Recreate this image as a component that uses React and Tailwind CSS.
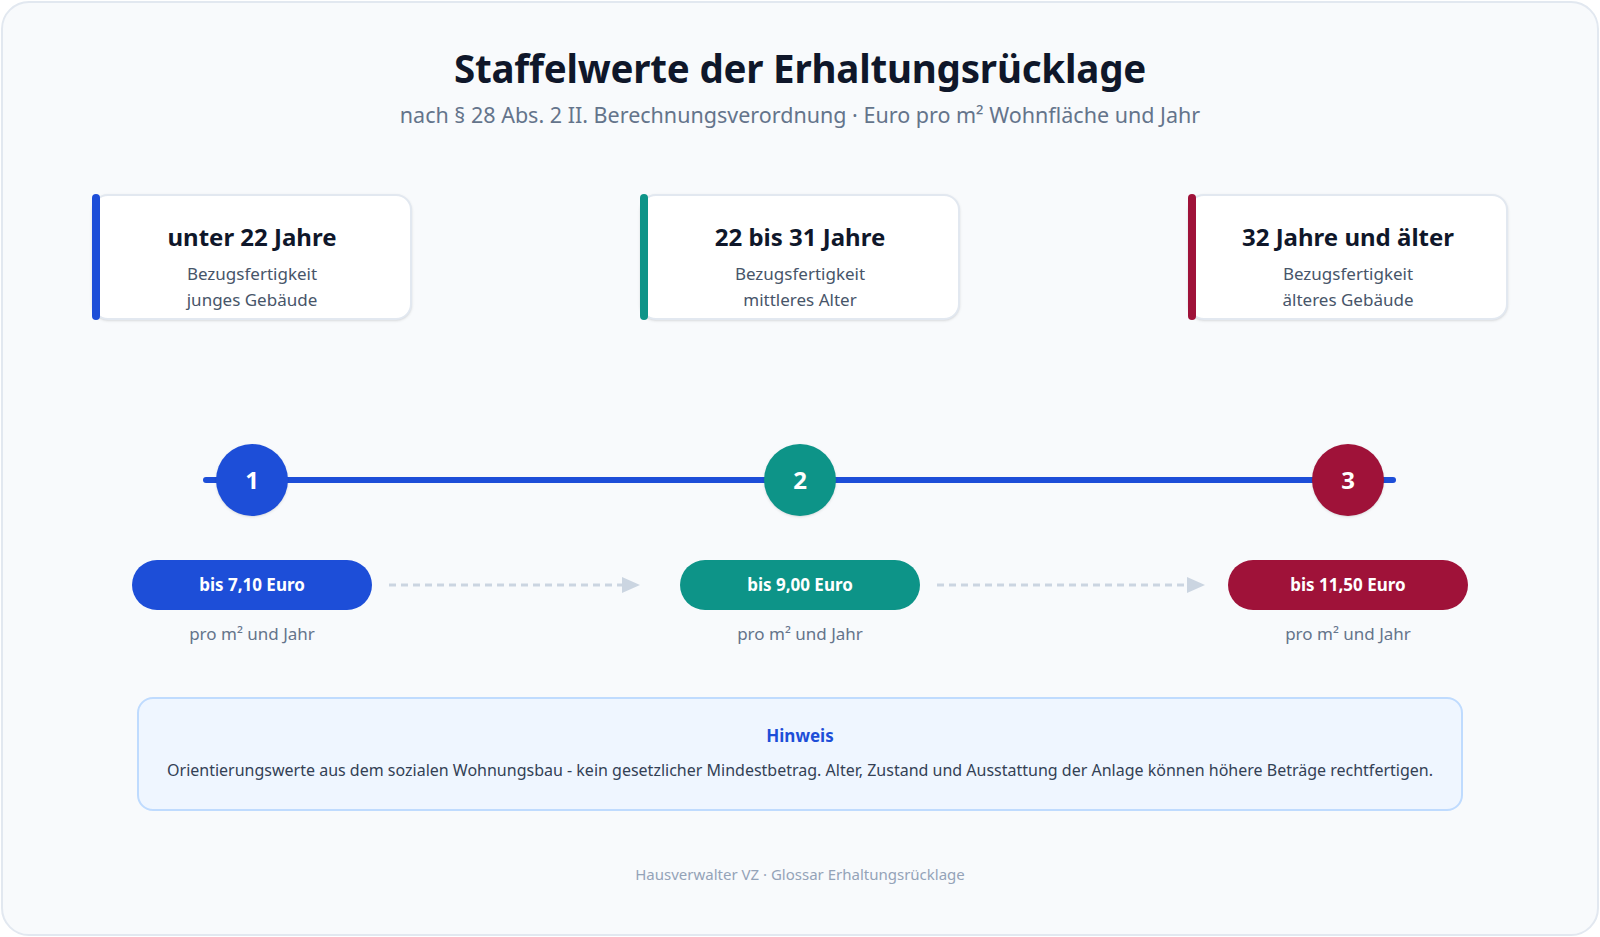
const stages = [
  {
    title: 'unter 22 Jahre',
    line1: 'Bezugsfertigkeit',
    line2: 'junges Gebäude',
    bar: 'bg-[#1d4ed8]',
    num: '1',
    price: 'bis 7,10 Euro',
  },
  {
    title: '22 bis 31 Jahre',
    line1: 'Bezugsfertigkeit',
    line2: 'mittleres Alter',
    bar: 'bg-[#0d9488]',
    num: '2',
    price: 'bis 9,00 Euro',
  },
  {
    title: '32 Jahre und älter',
    line1: 'Bezugsfertigkeit',
    line2: 'älteres Gebäude',
    bar: 'bg-[#9f1239]',
    num: '3',
    price: 'bis 11,50 Euro',
  },
];

function DashedArrow({ className, width }) {
  return (
    <svg
      width={width}
      height="18"
      viewBox={`0 0 ${width} 18`}
      className={`absolute top-[16px] ${className}`}
    >
      <line x1="0" y1="9" x2={width - 16} y2="9" stroke="#cbd5e1" strokeWidth="3" strokeDasharray="7 5" />
      <polygon points={`${width - 18},1 ${width},9 ${width - 18},17`} fill="#cbd5e1" />
    </svg>
  );
}

export default function App() {
  return (
    <div className="h-[937px] bg-white p-px" style={{ fontFamily: '"Noto Sans", "Open Sans", sans-serif' }}>
      <div className="h-full rounded-[28px] border-2 border-[#e2e8f0] bg-[#f8fafc] px-[89px] pt-[41px]">
        <div className="text-center">
          <h1 className="text-[38.5px] leading-[48px] font-bold text-[#0f172a] tracking-[-0.2px]">
            Staffelwerte der Erhaltungsrücklage
          </h1>
          <p className="mt-2 text-[21.5px] leading-[30px] text-[#64748b]">
            nach § 28 Abs. 2 II. Berechnungsverordnung · Euro pro m² Wohnfläche und Jahr
          </p>
        </div>

        {/* age cards */}
        <div className="mt-16 flex justify-between">
          {stages.map((s) => (
            <div
              key={s.num}
              className="relative w-[320px] h-[126px] rounded-2xl border-2 border-[#e2e8f0] bg-white shadow-sm flex flex-col items-center pt-[25px]"
            >
              <div className={`absolute -left-0.5 -top-0.5 -bottom-0.5 w-2 rounded-full ${s.bar}`} />
              <div className="text-[24px] leading-[32px] font-bold text-[#0f172a]">{s.title}</div>
              <div className="mt-2 text-[17px] leading-[26px] text-[#475569] text-center">
                <div>{s.line1}</div>
                <div>{s.line2}</div>
              </div>
            </div>
          ))}
        </div>

        {/* timeline */}
        <div className="relative mt-[124px] flex justify-between">
          <div className="absolute left-[111px] right-[112px] top-1/2 -translate-y-1/2 h-1.5 rounded-full bg-[#1d4ed8]" />
          {stages.map((s) => (
            <div key={s.num} className="relative w-[320px] flex justify-center">
              <div
                className={`w-[72px] h-[72px] rounded-full ${s.bar} flex items-center justify-center text-white text-[24px] font-bold shadow-sm`}
              >
                {s.num}
              </div>
            </div>
          ))}
        </div>

        {/* prices */}
        <div className="relative mt-11 flex justify-between">
          <DashedArrow className="left-[297px]" width={251} />
          <DashedArrow className="left-[845px]" width={268} />
          {stages.map((s) => (
            <div key={s.num} className="w-[320px] flex flex-col items-center">
              <div
                className={`w-[240px] h-[50px] rounded-full ${s.bar} flex items-center justify-center text-white text-[17px] font-bold`}
              >
                {s.price}
              </div>
              <div className="mt-3 text-[17px] leading-6 text-[#64748b]">pro m² und Jahr</div>
            </div>
          ))}
        </div>

        {/* note */}
        <div className="mx-auto mt-[51px] w-[1326px] h-[114px] rounded-2xl border-2 border-[#bfdbfe] bg-[#eff6ff] pt-[25px] text-center">
          <div className="text-[17px] leading-6 font-bold text-[#1d4ed8]">Hinweis</div>
          <p className="mt-2.5 text-[16px] leading-6 text-[#334155]">
            Orientierungswerte aus dem sozialen Wohnungsbau - kein gesetzlicher Mindestbetrag. Alter, Zustand und Ausstattung der Anlage können höhere Beträge rechtfertigen.
          </p>
        </div>

        <div className="mt-[53px] text-center text-[15px] leading-5 text-[#94a3b8]">
          Hausverwalter VZ · Glossar Erhaltungsrücklage
        </div>
      </div>
    </div>
  );
}
